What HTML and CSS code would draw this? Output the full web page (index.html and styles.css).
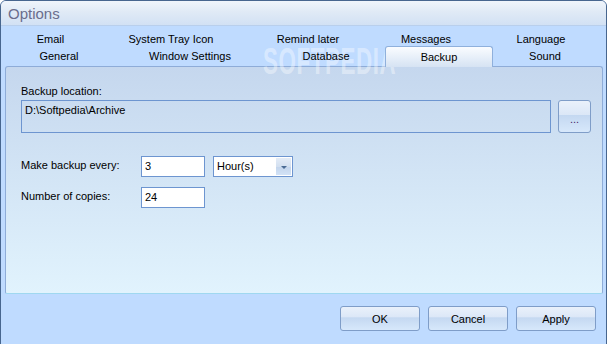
FILE: index.html
```html
<!DOCTYPE html>
<html lang="en">
<head>
  <meta charset="UTF-8">
  <title>Options</title>
  <link rel="stylesheet" href="styles.css">
</head>
<body>
  <div class="window">
    <div class="titlebar">Options</div>

    <div class="tabstrip">
      <div class="tabrow">
        <div class="tab w90">Email</div>
        <div class="tab w150">System Tray Icon</div>
        <div class="tab w124">Remind later</div>
        <div class="tab w112">Messages</div>
        <div class="tab w118">Language</div>
      </div>
      <div class="tabrow front">
        <div class="tab w108">General</div>
        <div class="tab w154">Window Settings</div>
        <div class="tab w118">Database</div>
        <div class="tab w108 selected">Backup</div>
        <div class="tab w104">Sound</div>
      </div>
    </div>

    <div class="panel">
      <div class="label">Backup location:</div>
      <div class="location">
        <div class="pathbox">D:\Softpedia\Archive</div>
        <button class="btn browse">...</button>
      </div>

      <div class="form">
        <div class="label">Make backup every:</div>
        <div class="field">
          <div class="input">3</div>
          <div class="combo">
            <span>Hour(s)</span>
            <span class="arrow"></span>
          </div>
        </div>
        <div class="label">Number of copies:</div>
        <div class="field">
          <div class="input">24</div>
        </div>
      </div>
    </div>

    <div class="footer">
      <button class="btn action">OK</button>
      <button class="btn action">Cancel</button>
      <button class="btn action">Apply</button>
    </div>

    <div class="watermark">SOFTPEDIA</div>
  </div>
</body>
</html>
```

FILE: styles.css
```css
body {
  margin: 0;
  background: #fff;
  font-family: 'Liberation Sans', Arial, sans-serif;
  font-size: 11px;
  color: #000;
}
.window {
  position: relative;
  width: 605px;
  height: 343px;
  border: 1px solid #47668f;
  border-radius: 6px 6px 0 0;
  background: #bfdbff;
  display: flex;
  flex-direction: column;
  overflow: hidden;
}
.titlebar {
  height: 24px;
  line-height: 26px;
  padding-left: 7px;
  font-size: 15px;
  color: #6a6d8c;
  background: linear-gradient(#f0f5fb, #e0eaf6 45%, #d2e1f4);
  border-bottom: 1px solid #b9cfec;
}
.tabstrip {
  padding: 4px 0 0 4px;
}
.tabrow {
  display: flex;
  height: 16px;
}
.tabrow.front {
  height: 20px;
  position: relative;
  z-index: 1;
}
.tab {
  text-align: center;
  line-height: 18px;
}
.tabrow.front .tab {
  line-height: 21px;
}
.tab.selected {
  box-sizing: border-box;
  height: 21px;
  border: 1px solid #8fb0dc;
  border-bottom: none;
  border-radius: 3px 3px 0 0;
  background: linear-gradient(#fafcff, #e4edf8 60%, #d6e3f3);
  line-height: 20px;
}
.w90 { width: 91px; }
.w104 { width: 104px; }
.w108 { width: 108px; }
.w112 { width: 112px; }
.w118 { width: 118px; }
.w124 { width: 124px; }
.w150 { width: 150px; }
.w154 { width: 154px; }
.panel {
  box-sizing: border-box;
  height: 228px;
  margin: 0 3px 0 4px;
  border: 1px solid #8eacd8;
  border-bottom-color: #9fd8f0;
  border-radius: 3px 3px 2px 2px;
  background: linear-gradient(#c5d7ee, #e1f3fd);
  padding: 18px 0 0 15px;
}
.label {
  line-height: 13px;
}
.location {
  display: flex;
  gap: 7px;
  margin-top: 2px;
}
.pathbox {
  box-sizing: border-box;
  width: 530px;
  height: 33px;
  border: 1px solid #6d95d0;
  padding: 3px 3px;
}
.btn {
  font-family: 'Liberation Sans', Arial, sans-serif;
  font-size: 11px;
  color: #000;
  box-sizing: border-box;
  border: 1px solid #7f9dc8;
  border-radius: 3px;
  background: linear-gradient(#eaf1fb, #dbe7f7 45%, #c4d8f1 46%, #d7e8fb);
  padding: 0;
}
.browse {
  width: 33px;
  height: 33px;
  padding-top: 4px;
  color: #4a2a6a;
}
.form {
  display: grid;
  grid-template-columns: 120px auto;
  row-gap: 10px;
  margin-top: 23px;
}
.form .label {
  padding-top: 3px;
}
.field {
  display: flex;
  gap: 8px;
  height: 21px;
}
.input {
  box-sizing: border-box;
  width: 64px;
  height: 21px;
  border: 1px solid #6d95d0;
  background: #fff;
  padding: 3px 3px;
  line-height: 13px;
}
.combo {
  box-sizing: border-box;
  width: 80px;
  height: 21px;
  border: 1px solid #6d95d0;
  background: #fff;
  display: flex;
  justify-content: space-between;
  padding-left: 3px;
  line-height: 19px;
}
.arrow {
  position: relative;
  width: 15px;
  margin: 1px;
  background: linear-gradient(#e4ecf7, #d3e0f0 50%, #c3d5ec 51%, #d2e2f6);
}
.arrow::after {
  content: "";
  position: absolute;
  left: 5px;
  top: 8px;
  border-left: 3px solid transparent;
  border-right: 3px solid transparent;
  border-top: 3px solid #4b6b94;
}
.footer {
  display: flex;
  justify-content: flex-end;
  gap: 8px;
  padding: 12px 10px 0 0;
}
.action {
  width: 80px;
  height: 25px;
}
.watermark {
  position: absolute;
  left: 262px;
  top: 40px;
  font-size: 36px;
  font-weight: bold;
  color: rgba(255, 255, 255, 0.4);
  transform: scaleX(0.62);
  transform-origin: left top;
  letter-spacing: 1px;
  pointer-events: none;
}
```
